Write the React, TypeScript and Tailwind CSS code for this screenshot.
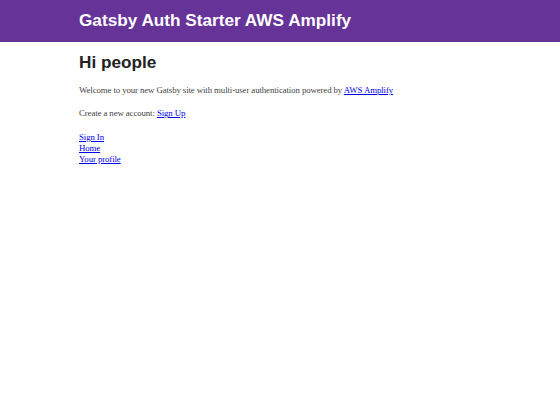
export default function App() {
  return (
    <div className="min-h-[420px] bg-white">
      {/* Header */}
      <header className="bg-[#663399] h-[42px] flex items-center">
        <div className="mx-auto w-[402px]">
          <h1 className="text-white font-bold text-[17.2px] leading-none font-['Liberation_Sans',Arial,sans-serif]">
            Gatsby Auth Starter AWS Amplify
          </h1>
        </div>
      </header>

      <main className="mx-auto w-[402px] pt-[9px] text-[hsla(0,0%,0%,0.8)] font-['Liberation_Serif','Times_New_Roman',serif] text-[8.8px] tracking-[-0.1px] leading-[11.3px]">
        <h2 className="font-bold text-[17.2px] tracking-normal leading-[22px] font-['Liberation_Sans',Arial,sans-serif] text-[#222]">
          Hi people
        </h2>
        <p className="mt-[12px]">
          Welcome to your new Gatsby site with multi-user authentication powered by{' '}
          <a href="#" className="text-[#0000ee] underline">AWS Amplify</a>
        </p>
        <p className="mt-[12px]">
          Create a new account: <a href="#" className="text-[#0000ee] underline">Sign Up</a>
        </p>
        <div className="mt-[12px] flex flex-col">
          <a href="#" className="text-[#0000ee] underline self-start">Sign In</a>
          <a href="#" className="text-[#0000ee] underline self-start">Home</a>
          <a href="#" className="text-[#0000ee] underline self-start">Your profile</a>
        </div>
      </main>
    </div>
  )
}
